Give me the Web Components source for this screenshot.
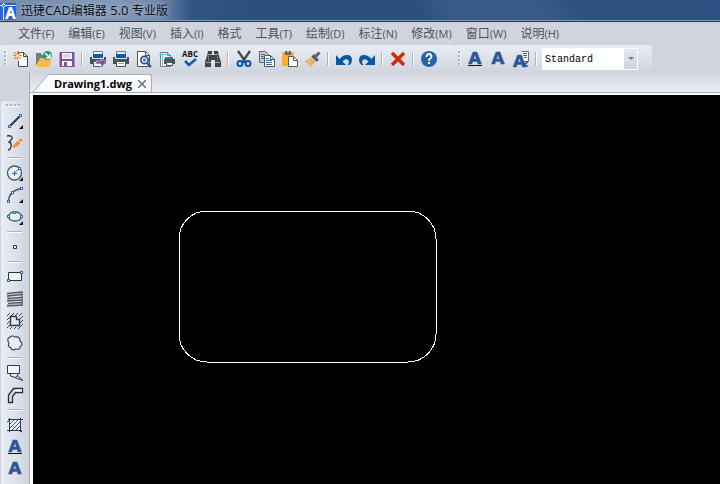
<!DOCTYPE html>
<html lang="zh-CN">
<head>
<meta charset="utf-8">
<title>迅捷CAD编辑器 5.0 专业版</title>
<style>
html, body { margin: 0; height: 100%; }
body { font: 12px/16px "Open Sans", "Noto Sans CJK SC", sans-serif; background: #d0d4dd; overflow: hidden; }
</style>
</head>
<body>
<cad-app></cad-app>
<script>
const letterA = '<path d="M1.500 13 6 1h4l4.500 12h-3.600L10.200 10.500H5.700L4.900 13zM6.500 7.900h2.900L8 4z" fill="#2c559c" stroke="#50658c" stroke-width=".6"/>';
const corner = '<path d="M16 12v4h-4z" fill="#111"/>';
const node = (x, y) => `<rect x="${x - .5}" y="${y - .5}" width="2" height="2" fill="#fff" stroke="#2f6cb8"/>`;
const printer = '<path d="M4 0h9v4H4z" fill="#f4f6f8"/><path d="M3.500 3V.500h9V3" fill="none" stroke="#777b80"/><path d="M3 3h10v4H3z" fill="#0c5bad"/><path d="M0 6h2v2h12V6h2v7h-3v-3H3v3H0z" fill="#4d5053"/><path d="M3.500 10.500h9v5h-9z" fill="#fff" stroke="#4d5053"/><path d="M5 12.500h6" stroke="#8ba6c4"/>';
const ICONS = {
  new: '<path d="M5.500 6V1.500h5l4 4v10h-9V10" fill="#fff" stroke="#4a4a4a"/><path d="M10.500 1.500v4h4" fill="none" stroke="#4a4a4a"/><path d="M4.500 0v9M0 4.500h9M1.300 1.300l6.400 6.400M7.700 1.300 1.300 7.700" stroke="#d58a24" stroke-width="1.200"/><circle cx="4.500" cy="4.500" r="1.500" fill="#fff3cd"/>',
  open: '<path d="M0 15V2h5l1 2h3v4H4z" fill="#7a7b7b"/><path d="M4 7h11v3l-2 6H1z" fill="#ffb944"/><circle cx="11.500" cy="4.500" r="4.500" fill="#219b67"/><path d="m9 2 5 5M14 3v4h-4" fill="none" stroke="#fff" stroke-width="1.500"/>',
  save: '<path d="M.5 1h15v15H.5z" fill="#80509a"/><path d="M3 2h10v6H3z" fill="#fff"/><path d="M4 4h8M4 6h8" stroke="#bbaec4"/><path d="M3 10h10v5H3z" fill="#fff"/><path d="M5 11h3v4H5z" fill="#80509a"/>',
  printGo: printer + '<path d="M6 10h5V6.500l5 5-5 5V13H6z" fill="#8747a6" stroke="#eee" stroke-width=".6"/>',
  print: printer,
  preview: '<path d="M1.500.500h8l4 4v11h-12z" fill="#fff" stroke="#505255"/><path d="M9.500.500v4h4" fill="none" stroke="#505255"/><circle cx="8.500" cy="9" r="3.700" fill="#dce9f9" stroke="#294f94" stroke-width="1.700"/><circle cx="8.500" cy="9" r="1.500" fill="#4a79b9"/><path d="m11 12 4 4" stroke="#294f94" stroke-width="2.300"/>',
  setup: '<path d="M1.500 1.500h7l3 3v11h-10z" fill="#fff" stroke="#75797d"/><path d="M8.500 1.500v3h3" fill="none" stroke="#75797d"/><path d="M3.500 0v16M0 3.500h9" stroke="#4cd3e3"/><path d="M6 6h8v3H6z" fill="#2e76bc"/><path d="M5 8h11v5h-2v2H7v-2H5z" fill="#505458"/><path d="M7.500 11.500h6v3h-6z" fill="#fff" stroke="#505458"/>',
  spell: '<text x="8" y="6" text-anchor="middle" font-family="Open Sans, sans-serif" font-size="8" font-weight="700" fill="#151515">ABC</text><path d="m3 10 4 4 7-6" fill="none" stroke="#1757a8" stroke-width="2.500"/>',
  find: '<path d="M3 0h4v4h2V0h4l1 5 2 6v5h-6V9H6v7H0v-5l2-6z" fill="#404346"/><path d="M2.500 3.500H7M9 3.500h4.500M1 11.500h5M10 11.500h5" stroke="#c2c7cd" stroke-width=".8"/><path d="M3.500 5v5M12.500 5v5" stroke="#777c82"/>',
  cut: '<path d="m2 0 7 10M14 0 7 10" stroke="#46494b" stroke-width="2.300"/><circle cx="4" cy="12.500" r="2.500" fill="none" stroke="#0755a7" stroke-width="2"/><circle cx="12" cy="12.500" r="2.500" fill="none" stroke="#0755a7" stroke-width="2"/><path d="M6 11h4" stroke="#0755a7" stroke-width="2"/>',
  copy: '<path d="M.5.500h6l3 3v8h-9z" fill="#c6cbd2" stroke="#666a70"/><path d="M2 3.500h4M2 5.500h3M2 7.500h3" stroke="#666a70"/><path d="M5.500 4.500h6l4 4v7h-10z" fill="#fff" stroke="#555"/><path d="M11.500 4.500v4h4" fill="none" stroke="#555"/><path d="M7 7.500h3M7 9.500h6M7 11.500h6M7 13.500h6" stroke="#306bac"/>',
  paste: '<path d="M0 1h12v14H0z" fill="#ffad2e"/><path d="M3 0h6v4H3z" fill="#606164"/><path d="M5 1h2" stroke="#fff"/><path d="M6.500 5.500h5l4 4v6h-9z" fill="#fff" stroke="#575757"/><path d="M11.500 5.500v4h4" fill="none" stroke="#575757"/>',
  brush: '<path d="m0 10 7-4 4 4-5 6-2-1 1-2-2 1-1-1 1-2-2 1z" fill="#e5b36e"/><path d="m6 6 3-3 5 6-3 2z" fill="#5d6062"/><path d="m10.500 5.500 4-4" stroke="#5d6062" stroke-width="3"/><path d="m6 6 5 5" stroke="#fff" stroke-width=".7"/>',
  undo: '<path d="M0 4v10h10l-3.500-3.500Q10 7 12 9q2 2-.5 5h2Q16 12 16 9q0-5-5-5-4 0-7.500 4z" fill="#0755a7"/>',
  redo: '<path d="M16 4v10H6l3.500-3.500Q6 7 4 9q-2 2 .5 5h-2Q0 12 0 9q0-5 5-5 4 0 7.500 4z" fill="#0755a7"/>',
  remove: '<path d="m2 2 12 12M14 2 2 14" stroke="#d42c0b" stroke-width="3.500"/>',
  help: '<circle cx="8" cy="8" r="8" fill="#2864a7"/><path d="M5.500 6V5Q6 3 8 3t2.500 2.300Q10.500 7 9 7.800q-1 .7-1 2.200" fill="none" stroke="#fff" stroke-width="1.800"/><path d="M7 11h2v2H7z" fill="#fff"/>',
  textLine: letterA + '<path d="M1 14.500h14" stroke="#111"/>',
  text: letterA,
  textEdit: '<path d="M8.500.500h7v10h-5" fill="#f6f8fa" stroke="#686d72"/><path d="M10 2.500h4M10 4.500h4M11 6.500h3" stroke="#5e6369"/><g transform="translate(-1.500 3)">' + letterA + '</g><path d="m15 10-4 5M11 11v4h4" fill="none" stroke="#1661ac" stroke-width="1.500"/>',
  line: '<path d="M2 14 14 2" stroke="#23364f" stroke-width="2"/>' + node(2, 13) + node(13, 2) + corner,
  pencil: '<path d="M0 1q6-1 5 3-1 1-3 3 3 1 2 5-1 3-3 3" fill="none" stroke="#27374c" stroke-width="1.400"/><path d="m5 12 2-3 6-6h1l2 2v1l-6 6-4 2z" fill="#e99b35" stroke="#fff" stroke-width=".4"/><path d="m11 5 3 3" stroke="#fff2d8"/><path d="m5 12 2 1-3 1z" fill="#fff4d6"/>',
  circle: '<circle cx="7.500" cy="8" r="7" fill="#e8f0f9" stroke="#4b5666" stroke-width="1.300"/><path d="M7.500 6v5M5 8.500h5m-2-1 4-4" stroke="#346eb5"/>' + node(12, 3) + corner,
  arc: '<path d="M1.500 14Q2 4 14 1.500" fill="none" stroke="#4b5666" stroke-width="1.300"/>' + node(1, 14) + node(5, 5) + node(14, 1) + corner,
  ellipse: '<ellipse cx="8" cy="7.500" rx="6.500" ry="4.500" fill="#e8f0f9" stroke="#4b5666" stroke-width="1.300"/>' + node(1, 7) + node(7, 3) + node(14, 7) + corner,
  point: '<path d="M6.500 6.500h3v3h-3z" fill="#fff" stroke="#26354c"/>',
  rectangle: '<path d="M1.500 3.500h13v8h-13z" fill="#f2f6fb" stroke="#26354c"/>' + node(14, 3) + node(1, 11),
  scribble: '<path d="M0 2.500 16 1M0 5l16-1.500M1 7.500 16 6.500M0 10l16-1M1 12.500l15-1M0 15l16-1" stroke="#55585c" stroke-width="1.700"/><path d="M0 3.500 15 2.500M1 8.500l15-1M0 13.500l16-1" stroke="#999ca1" stroke-width=".8"/><path d="M15 1v5M1 4v6M15 8v6" stroke="#666a70"/>',
  region: '<path d="m0 3 3-3M0 7l7-7M4 3l3-3M8 3l3-3M12 3l3-3M0 11l3-3M0 15l3-3M13 6l3-3M13 10l3-3M13 14l3-3M3 16l2-2M7 16l2-2M11 16l2-2" stroke="#27354a" stroke-width=".9"/><path d="M3.500 3.500h6v3h3v6h-9z" fill="#e9eef7" stroke="#263b57" stroke-width="1.400"/>',
  cloud: '<path d="M2 8Q-1 4 3 2q2-2 5 0 5-1 5 4 4 3 0 6 0 3-4 2-4 2-5-1-4-2-2-5z" fill="#e7eef8" stroke="#34445a" stroke-width="1.200"/>',
  wipeout: '<path d="M.5.500h12v8H.5z" fill="#f1f5fb" stroke="#273b58"/><path d="M3.500 9v2l5 1.500 3-3.500M8 12.500l8 3-6-5" fill="#e7edf6" stroke="#273b58"/>',
  polyline: '<path d="M1.500 15.500V8l5-6.500h9v4h-7l-3 4v6z" fill="#d3d8ec" stroke="#292d32" stroke-width="1.300"/><path d="M8 3.500h7" stroke="#fff" stroke-width="2"/>',
  hatch: '<path d="M2.500 2.500h11v11h-11z" fill="#f1f5fb"/><path d="M1 2.500h15M0 13.500h15M2.500 1v14M13.500 1v14" stroke="#273b58"/><path d="m3 7 4-4M3 11l8-8M4 14 14 4M8 14l6-6M0 5l3-2M13 13l2 2" stroke="#273b58" stroke-width=".9"/>'
};

function define(name, markup, setup) {
  customElements.define(name, class extends HTMLElement {
    connectedCallback() {
      if (this.shadowRoot) return;
      const root = this.attachShadow({ mode: 'open' });
      root.innerHTML = markup;
      if (setup) setup(this, root);
    }
  });
}

define('tool-button', `<style>
:host { display: block; }
button { display: flex; align-items: center; box-sizing: border-box; width: 23px; height: 24px; padding: 0 3px 0 4px; border: 0; background: none; }
:host([compact]) button { height: 22px; }
button:hover { background: #f6e7bd; }
svg { display: block; width: 16px; height: 16px; overflow: visible; }
</style><button type="button"></button>`, (host, root) => {
  const button = root.querySelector('button');
  button.title = host.getAttribute('label');
  button.setAttribute('aria-label', button.title);
  button.innerHTML = `<svg viewBox="0 0 16 16" aria-hidden="true">${ICONS[host.getAttribute('icon')]}</svg>`;
});

define('tool-separator', `<style>
:host { display: flex; justify-content: center; align-items: center; width: 8px; height: 24px; }
i { display: block; width: 1px; height: 14px; background: #aeb3bc; border-right: 1px solid #fff; }
:host([across]) { width: 29px; height: 8px; }
:host([across]) i { width: 15px; height: 1px; border: 0; border-bottom: 1px solid #fff; }
</style><i></i>`);

define('title-bar', `<style>
:host { display: flex; align-items: center; height: 20px; color: #0a0d13; border-bottom: 1px solid #8799b3; box-shadow: 0 1px #25344c; margin-bottom: 1px;
 background: linear-gradient(55deg, transparent 58%, #41628f88 62% 75%, transparent 80%), linear-gradient(90deg, #3f5f8d, #2b5080 35%, #2b5080 60%, #2c5283); }
.caption { display: flex; align-items: center; height: 20px; gap: 4px; padding-right: 24px; background: linear-gradient(90deg, #7189ab, #8298b7 60%, #7189ab 82%, transparent); }
svg { display: block; width: 17px; height: 20px; }
h1 { margin: 0; font: 12px/20px "Noto Sans CJK SC", sans-serif; white-space: nowrap; text-shadow: 0 0 5px #c9d6e8; }
::slotted(span) { font: 13px/20px "Open Sans", sans-serif; }
</style><div class="caption"><svg viewBox="0 0 17 20" aria-hidden="true"><path d="M0 3h16v17H0z" fill="#2465db"/><path d="M3.500 3v17M0 5.500h16" stroke="#d7e7ff"/><circle cx="3.500" cy="5.500" r="1.500" fill="#2465db" stroke="#fff"/><path d="m5 19 4-12h3l4 12h-3l-1-3H9l-1 3zm5-6h2l-1-3z" fill="#fff"/></svg><h1><slot></slot></h1></div>`);

define('menu-item', `<style>
:host { display: block; }
button { display: block; padding: 0; border: 0; background: none; color: #4c5260; font: 12px/21px "Noto Sans CJK SC", sans-serif; white-space: nowrap; }
button:hover { color: #16305c; }
span { font: 11px/21px "Open Sans", sans-serif; }
</style><button type="button"><slot></slot><span></span></button>`, (host, root) => {
  const key = host.getAttribute('key');
  if (key) root.querySelector('span').textContent = `(${key})`;
});

define('menu-bar', `<style>
:host { display: flex; gap: 14px; height: 23px; padding-left: 18px; background: #d0d4dd; }
</style><slot></slot>`);

define('tool-bar', `<style>
:host { display: flex; align-items: center; height: 27px; padding: 0 14px 0 4px; border-radius: 3px; background: linear-gradient(#e9edf6, #dde1ea 50%, #d0d4dd); }
.grip { width: 3px; height: 15px; margin-right: 2px; background: repeating-linear-gradient(#aeb3bd 0 2px, transparent 2px 4px); border-right: 1px solid #f5f7fa; box-sizing: border-box; }
</style><div class="grip"></div><slot></slot>`);

define('style-picker', `<style>
:host { display: grid; grid-template-columns: 1fr 14px; align-items: center; width: 96px; height: 22px; background: #fff; margin-left: 2px; }
select { grid-area: 1 / 1 / 2 / 3; appearance: none; box-sizing: border-box; width: 100%; height: 22px; padding: 2px 16px 0 3px; border: 0; border-radius: 0; background: #fff; color: #000; font: 10px/20px "Liberation Mono", monospace; }
i { grid-area: 1 / 2; display: flex; align-items: center; justify-content: center; height: 20px; margin-right: 1px; background: linear-gradient(#e3e7ef, #cfd4de); pointer-events: none; z-index: 1; }
i::after { content: ""; border: 3px solid transparent; border-top-color: #777c85; border-bottom: 0; }
</style><select aria-label="文字样式"><option>Standard</option></select><i></i>`);

define('document-tab', `<style>
:host { display: flex; height: 18px; }
svg { display: block; width: 17px; height: 18px; }
.label { display: flex; align-items: center; gap: 5px; padding: 0 4px; background: linear-gradient(#fff, #f5f7fb); border: solid #a7acb8; border-width: 1px 1px 0 0; border-radius: 0 3px 0 0; box-sizing: border-box; }
b { font: 700 11px/16px "Open Sans", sans-serif; color: #000; }
button { display: block; width: 10px; height: 14px; padding: 1px; border: 0; background: none; }
button svg { width: 8px; height: 8px; }
</style><svg viewBox="0 0 17 18" aria-hidden="true"><path d="M0 18 14 2q1-2 3-2v18z" fill="#fbfcfe"/><path d="M0 18 14 2q1-1.500 3-1.500" fill="none" stroke="#a7acb8"/></svg><div class="label"><b><slot></slot></b><button type="button" aria-label="关闭"><svg viewBox="0 0 8 8"><path d="m0 0 8 8M8 0 0 8" stroke="#707070" stroke-width="1.500"/></svg></button></div>`);

define('drawing-canvas', `<style>
:host { display: block; min-height: 0; background: #000; border: solid #fff; border-width: 2px 0 0 3px; }
svg { display: block; width: 100%; height: 100%; }
</style><svg role="img" aria-label="圆角矩形"><rect x="146" y="116" width="257" height="151" rx="28" fill="none" stroke="#fff" shape-rendering="crispEdges"/></svg>`);

define('tool-palette', `<style>
:host { display: block; padding-top: 2px; border-radius: 3px 0 0 0; margin-left: 1px; background: linear-gradient(90deg, #e9edf6, #dde1ea 50%, #cdd2dc); }
.grip { width: 15px; height: 3px; margin: 1px 0 3px 5px; background: repeating-linear-gradient(90deg, #aeb3bd 0 2px, transparent 2px 4px); border-bottom: 1px solid #f5f7fa; box-sizing: border-box; }
.items { display: flex; flex-direction: column; padding-left: 2px; }
</style><div class="grip"></div><div class="items"><slot></slot></div>`);

define('cad-app', `<style>
:host { display: grid; grid-template-rows: auto auto auto 1fr; height: 100vh; overflow: hidden; }
.bars { display: flex; }
main { display: grid; grid-template-columns: 29px 1fr; min-height: 0; background: #d0d4dd; }
aside { padding-top: 29px; display: grid; min-height: 0; overflow: hidden; }
section { display: grid; grid-template-rows: auto 1fr; min-width: 0; min-height: 0; border-left: 1px solid #a5aab6; }
nav { padding: 2px 0 0 3px; background: linear-gradient(#d0d4dd, #eceff6); border-bottom: 1px solid #a5aab6; }
tool-separator[across] { margin-left: -3px; }
</style>
<title-bar>迅捷<span>CAD</span>编辑器<span> 5.0 </span>专业版</title-bar>
<menu-bar><menu-item key="F">文件</menu-item><menu-item key="E">编辑</menu-item><menu-item key="V">视图</menu-item><menu-item key="I">插入</menu-item><menu-item>格式</menu-item><menu-item key="T">工具</menu-item><menu-item key="D">绘制</menu-item><menu-item key="N">标注</menu-item><menu-item key="M">修改</menu-item><menu-item key="W">窗口</menu-item><menu-item key="H">说明</menu-item></menu-bar>
<div class="bars">
<tool-bar><tool-button icon="new" label="新建"></tool-button><tool-button icon="open" label="打开"></tool-button><tool-button icon="save" label="保存"></tool-button><tool-separator></tool-separator><tool-button icon="printGo" label="快速打印"></tool-button><tool-button icon="print" label="打印"></tool-button><tool-button icon="preview" label="打印预览"></tool-button><tool-button icon="setup" label="页面设置"></tool-button><tool-button icon="spell" label="拼写检查"></tool-button><tool-button icon="find" label="查找"></tool-button><tool-separator></tool-separator><tool-button icon="cut" label="剪切"></tool-button><tool-button icon="copy" label="复制"></tool-button><tool-button icon="paste" label="粘贴"></tool-button><tool-button icon="brush" label="格式刷"></tool-button><tool-separator></tool-separator><tool-button icon="undo" label="撤销"></tool-button><tool-button icon="redo" label="重做"></tool-button><tool-separator></tool-separator><tool-button icon="remove" label="删除"></tool-button><tool-separator></tool-separator><tool-button icon="help" label="帮助"></tool-button></tool-bar>
<tool-bar><tool-button icon="textLine" label="单行文字"></tool-button><tool-button icon="text" label="多行文字"></tool-button><tool-button icon="textEdit" label="编辑文字"></tool-button><tool-separator></tool-separator><style-picker></style-picker></tool-bar>
</div>
<main><aside><tool-palette><tool-button compact icon="line" label="直线"></tool-button><tool-button compact icon="pencil" label="徒手画"></tool-button><tool-separator across></tool-separator><tool-button compact icon="circle" label="圆"></tool-button><tool-button compact icon="arc" label="圆弧"></tool-button><tool-button compact icon="ellipse" label="椭圆"></tool-button><tool-separator across></tool-separator><tool-button compact icon="point" label="点"></tool-button><tool-separator across></tool-separator><tool-button compact icon="rectangle" label="矩形"></tool-button><tool-button compact icon="scribble" label="涂抹"></tool-button><tool-button compact icon="region" label="面域"></tool-button><tool-button compact icon="cloud" label="云线"></tool-button><tool-separator across></tool-separator><tool-button compact icon="wipeout" label="遮罩"></tool-button><tool-button compact icon="polyline" label="多线"></tool-button><tool-separator across></tool-separator><tool-button compact icon="hatch" label="填充"></tool-button><tool-button compact icon="textLine" label="单行文字"></tool-button><tool-button compact icon="text" label="多行文字"></tool-button></tool-palette></aside>
<section><nav><document-tab>Drawing1.dwg</document-tab></nav><drawing-canvas></drawing-canvas></section></main>`);
</script>
</body>
</html>
